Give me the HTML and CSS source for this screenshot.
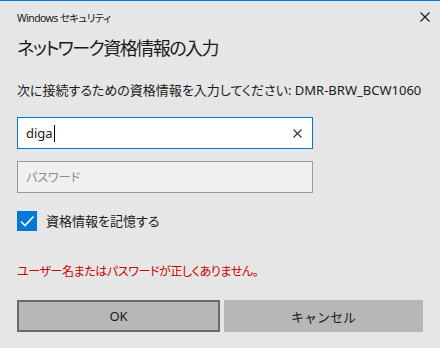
FILE: index.html
```html
<!DOCTYPE html>
<html lang="ja">
  <head>
    <meta charset="UTF-8" />
    <meta name="viewport" content="width=device-width, initial-scale=1.0" />
    <title>Windows セキュリティ</title>
    <link rel="stylesheet" href="styles.css">
  </head>
  <body>
    <div class="dialog">
      <div class="titlebar">
        <span class="app-name">Windows セキュリティ</span>
        <button class="close-button" aria-label="閉じる">
          <svg width="10" height="10" viewBox="0 0 10 10">
            <path d="M0.5 0.5 L9.5 9.5 M9.5 0.5 L0.5 9.5" stroke="#1a1a1a" stroke-width="1.1" fill="none" />
          </svg>
        </button>
      </div>

      <h1>ネットワーク資格情報の入力</h1>
      <p class="prompt">次に接続するための資格情報を入力してください: DMR-BRW_BCW1060</p>

      <div class="field focused">
        <span class="field-value">diga</span><span class="caret"></span>
        <svg class="clear-icon" width="9" height="9" viewBox="0 0 9 9">
          <path d="M0.5 0.5 L8.5 8.5 M8.5 0.5 L0.5 8.5" stroke="#333" stroke-width="1.1" fill="none" />
        </svg>
      </div>
      <div class="field empty">
        <span class="placeholder">パスワード</span>
      </div>

      <label class="remember">
        <span class="checkbox">
          <svg width="20" height="20" viewBox="0 0 20 20">
            <path d="M4 10.5 L8 14.5 L16.5 5.5" stroke="#fff" stroke-width="1.6" fill="none" />
          </svg>
        </span>
        資格情報を記憶する
      </label>

      <p class="error">ユーザー名またはパスワードが正しくありません。</p>

      <div class="buttons">
        <button class="btn btn-default">OK</button>
        <button class="btn">キャンセル</button>
      </div>
    </div>
  </body>
</html>
```

FILE: styles.css
```css
:root {
  --accent: #0078d7;
  --window-bg: #e6e6e6;
  --text: #1a1a1a;
  --button-bg: #b7b7b7;
  --error: #c80000;
}
body {
  margin: 0;
  background-color: var(--window-bg);
  border-top: 1px solid var(--accent);
  font-family: "Noto Sans", "Noto Sans CJK JP", sans-serif;
  color: var(--text);
  font-feature-settings: "palt";
}
.dialog {
  display: flex;
  flex-direction: column;
  padding: 0 17px;
  height: 347px;
  box-sizing: border-box;
}
.titlebar {
  display: flex;
  justify-content: space-between;
  align-items: center;
  height: 32px;
  margin-right: -7px;
}
.app-name {
  font-size: 10.5px;
  letter-spacing: -0.6px;
}
.close-button {
  background: none;
  border: none;
  padding: 0;
  width: 10px;
  height: 10px;
  display: flex;
}
h1 {
  margin: 1px 0 0;
  font-size: 18px;
  font-weight: 400;
  line-height: 28px;
  letter-spacing: -1.5px;
}
.prompt {
  margin: 18px 0 0;
  font-size: 13px;
  line-height: 20px;
}
.field {
  display: flex;
  align-items: center;
  width: 296px;
  height: 32px;
  box-sizing: border-box;
  padding: 0 10px 0 8px;
  border: 1px solid #999;
  font-size: 13px;
}
.field.focused {
  margin-top: 17px;
  background-color: #fff;
  border-color: var(--accent);
}
.field.empty {
  margin-top: 12px;
  background-color: #f0f0f0;
}
.caret {
  width: 1px;
  height: 17px;
  background-color: #000;
  margin-left: 1px;
}
.clear-icon {
  margin-left: auto;
}
.placeholder {
  color: #8a8a8a;
  font-size: 12px;
}
.remember {
  display: flex;
  align-items: center;
  gap: 9px;
  margin-top: 18px;
  font-size: 13px;
  line-height: 20px;
}
.checkbox {
  width: 20px;
  height: 20px;
  background-color: var(--accent);
  display: flex;
}
.error {
  margin: 31px 0 0;
  font-size: 12px;
  letter-spacing: -0.4px;
  line-height: 20px;
  color: var(--error);
}
.buttons {
  display: flex;
  gap: 4px;
  margin-top: 18px;
}
.btn {
  flex: 1;
  height: 32px;
  border: none;
  background-color: var(--button-bg);
  font-family: inherit;
  font-size: 13px;
  color: var(--text);
}
.btn-default {
  border: 2px solid #6b6b6b;
}
```
